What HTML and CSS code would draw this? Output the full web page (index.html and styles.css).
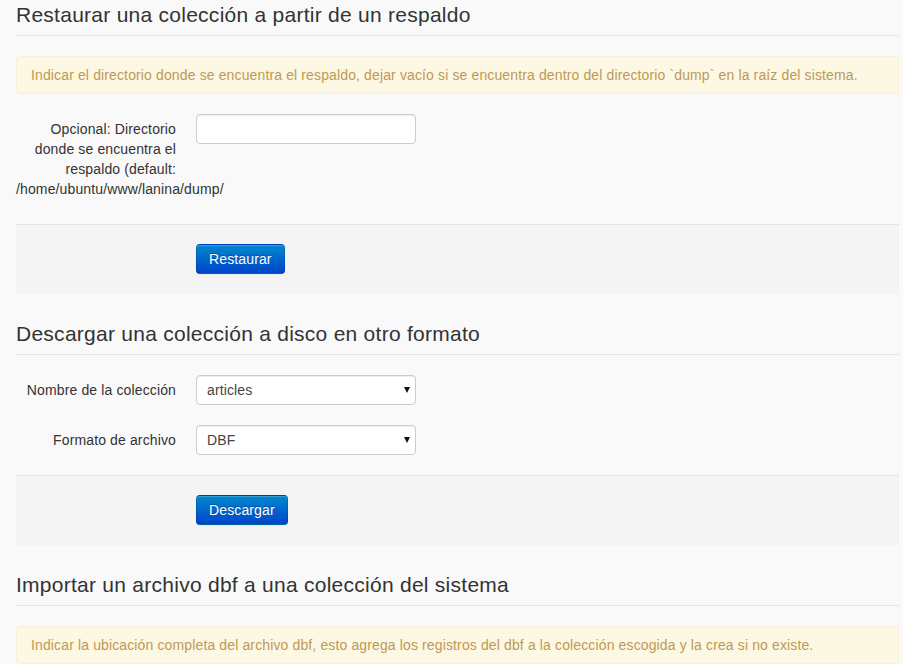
FILE: index.html
```html
<!DOCTYPE html>
<html lang="es">
<head>
<meta charset="utf-8">
<title>Respaldo</title>
<link rel="stylesheet" href="styles.css">
</head>
<body>
<div class="page">
  <form class="form-horizontal">
    <fieldset>
      <legend>Restaurar una colección a partir de un respaldo</legend>
      <div class="alert">Indicar el directorio donde se encuentra el respaldo, dejar vacío si se encuentra dentro del directorio `dump` en la raíz del sistema.</div>
      <div class="control-group tall">
        <label class="control-label">Opcional: Directorio donde se encuentra el respaldo (default: /home/ubuntu/www/lanina/dump/</label>
        <div class="controls"><input type="text" class="input"></div>
      </div>
      <div class="form-actions"><button type="button" class="btn">Restaurar</button></div>
    </fieldset>
  </form>
  <form class="form-horizontal">
    <fieldset>
      <legend>Descargar una colección a disco en otro formato</legend>
      <div class="control-group">
        <label class="control-label">Nombre de la colección</label>
        <div class="controls"><span class="select-wrap"><select class="select"><option>articles</option></select></span></div>
      </div>
      <div class="control-group">
        <label class="control-label">Formato de archivo</label>
        <div class="controls"><span class="select-wrap"><select class="select"><option>DBF</option></select></span></div>
      </div>
      <div class="form-actions"><button type="button" class="btn">Descargar</button></div>
    </fieldset>
  </form>
  <form class="form-horizontal">
    <fieldset>
      <legend>Importar un archivo dbf a una colección del sistema</legend>
      <div class="alert">Indicar la ubicación completa del archivo dbf, esto agrega los registros del dbf a la colección escogida y la crea si no existe.</div>
    </fieldset>
  </form>
</div>
</body>
</html>
```
FILE: styles.css
```css
html, body {
  margin: 0;
  padding: 0;
}
body {
  background: #f9f9f9;
  font-family: "Liberation Sans", Arial, Helvetica, sans-serif;
  font-size: 14px;
  line-height: 20px;
  letter-spacing: 0.13px;
  color: #333;
  overflow: hidden;
}
.page {
  margin: -5px 4px 0 16px;
}
.form-horizontal {
  margin: 0 0 20px 0;
}
fieldset {
  margin: 0;
  padding: 0;
  border: 0;
  min-width: 0;
}
legend {
  display: block;
  width: 100%;
  padding: 0;
  margin: 0 0 20px 0;
  font-size: 21px;
  line-height: 40px;
  letter-spacing: 0.26px;
  color: #333;
  border-bottom: 1px solid #e5e5e5;
}
.alert {
  padding: 8px 35px 8px 14px;
  margin-bottom: 20px;
  background: #fcf8e3;
  border: 1px solid #fbeed5;
  border-radius: 4px;
  color: #c09853;
}
.control-group {
  display: flex;
  align-items: flex-start;
  margin-bottom: 20px;
}
.control-group.tall {
  margin-bottom: 25px;
}
.control-label {
  flex: 0 0 160px;
  width: 160px;
  padding-top: 5px;
  text-align: right;
  color: #333;
}
.controls {
  margin-left: 20px;
}
.input, .select {
  box-sizing: border-box;
  width: 220px;
  height: 30px;
  margin: 0;
  padding: 4px 10px;
  font-family: inherit;
  font-size: 14px;
  line-height: 20px;
  letter-spacing: 0.13px;
  color: #555;
  background: #fff;
  border: 1px solid #ccc;
  border-radius: 4px;
  box-shadow: inset 0 1px 1px rgba(0,0,0,0.075);
  display: block;
}
.select {
  -webkit-appearance: none;
  appearance: none;
  padding: 4px 24px 4px 10px;
  color: #444;
}
.select-wrap {
  position: relative;
  display: block;
}
.select-wrap::after {
  content: "";
  position: absolute;
  right: 6px;
  top: 12px;
  border-left: 3.5px solid transparent;
  border-right: 3.5px solid transparent;
  border-top: 6px solid #111;
  pointer-events: none;
}
.form-actions {
  padding: 19px 20px 20px 180px;
  margin: 0;
  background: #f4f4f4;
  border-top: 1px solid #e5e5e5;
}
.btn {
  display: inline-block;
  height: 30px;
  padding: 4px 12px;
  font-family: inherit;
  font-size: 14px;
  line-height: 20px;
  letter-spacing: 0.13px;
  color: #fff;
  text-shadow: 0 -1px 0 rgba(0,0,0,0.25);
  background-color: #006dcc;
  background-image: linear-gradient(to bottom, #0088cc, #0044cc);
  border: 1px solid rgba(0,0,0,0.1);
  border-bottom-color: rgba(0,0,0,0.25);
  border-radius: 4px;
  box-shadow: inset 0 1px 0 rgba(255,255,255,0.2), 0 1px 2px rgba(0,0,0,0.05);
  cursor: pointer;
}
```
